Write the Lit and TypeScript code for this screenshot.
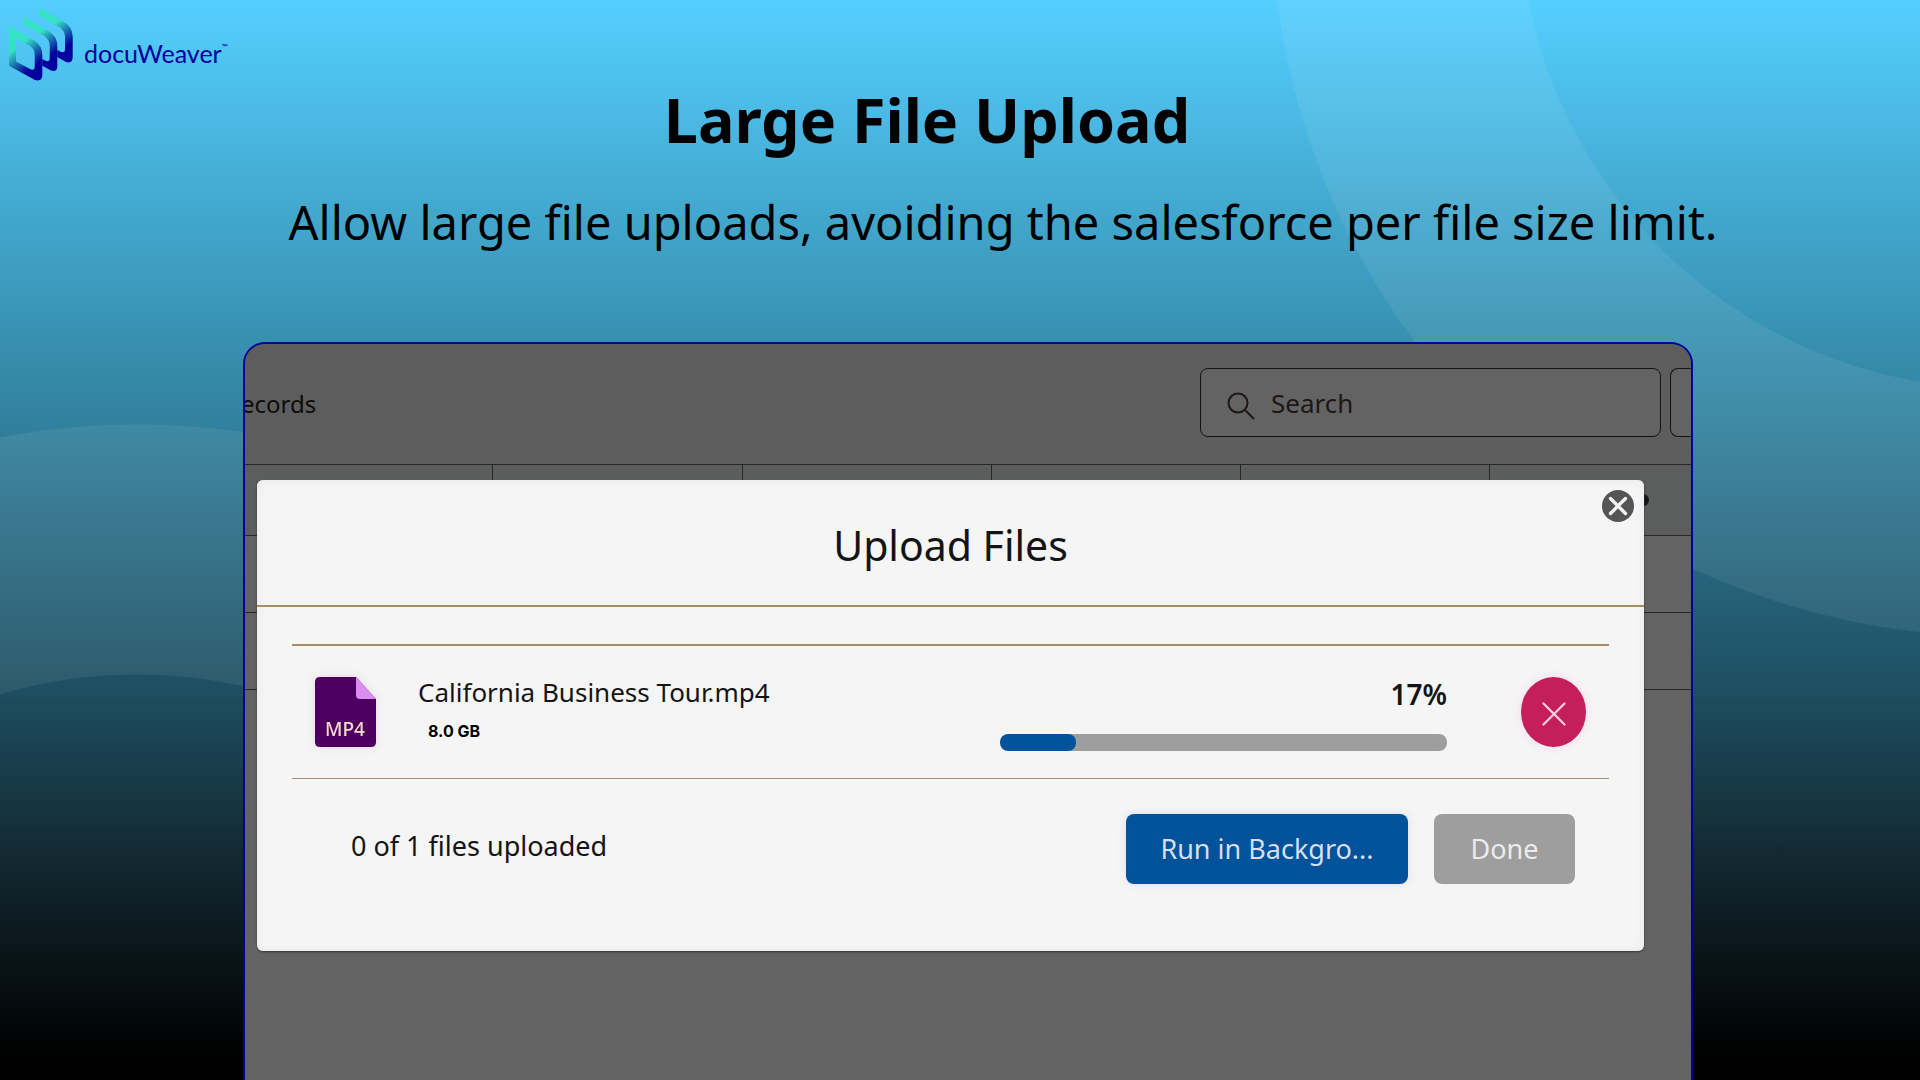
import { LitElement, html, css, svg } from "lit";
import { customElement, state } from "lit/decorators.js";

const cross = (w: number) => svg`<path d="M3 3 L21 21 M21 3 L3 21" fill="none" stroke="currentColor" stroke-linecap="round" stroke-width=${w} />`;

@customElement("app-root")
export class AppRoot extends LitElement {
  @state() private progress = 17;

  static styles = css`
    :host {
      display: block;
      font-family: "Noto Sans", "Open Sans", sans-serif;
      color: #141414;
    }
    * { box-sizing: border-box; }
    .page {
      display: flex;
      flex-direction: column;
      height: 100vh;
      overflow: hidden;
      background:
        radial-gradient(circle at calc(100% + 80px) -92px, transparent 480px, rgba(255, 255, 255, 0.07) 481px, rgba(255, 255, 255, 0.07) 728px, transparent 729px),
        radial-gradient(circle at 137px 1155px, transparent 480px, rgba(255, 255, 255, 0.07) 481px, rgba(255, 255, 255, 0.07) 730px, transparent 731px),
        linear-gradient(#54cfff 0%, #3487a5 36%, #1e4e61 64%, #12272f 80%, #000 98%);
    }
    .brand {
      display: flex;
      align-items: center;
      align-self: flex-start;
      gap: 11px;
      height: 88px;
      padding-left: 8px;
      color: #00009c;
      text-decoration: none;
    }
    .mark { width: 65px; height: 73px; }
    .name { font: 25px/32px "Lato", sans-serif; padding-top: 18px; }
    .tm { font-size: 8px; vertical-align: top; line-height: 20px; }
    .intro { text-align: center; color: #000; height: 254px; }
    .title { margin: 0 0 40px; padding-right: 66px; font: bold 61px/64px "Noto Sans", sans-serif; }
    .lead { margin: 0; padding-left: 86px; font: 47px/60px "Noto Sans", sans-serif; }
    .frame {
      position: relative;
      flex: 1;
      margin: 0 227px 0 243px;
      border: 2px solid #00009c;
      border-bottom: 0;
      border-radius: 22px 22px 0 0;
      overflow: hidden;
      background: #636363;
    }
    .toolbar {
      display: flex;
      align-items: center;
      height: 120px;
      padding-bottom: 3px;
      background: #5d5d5d;
      font-size: 26px;
      gap: 9px;
    }
    .crumb { flex: 1; margin-left: -4px; padding-top: 2px; color: #0c0c0c; font-size: 24px; }
    .search {
      display: flex;
      align-items: center;
      gap: 16px;
      width: 461px;
      height: 69px;
      padding: 0 26px;
      border: 1px solid #161311;
      border-radius: 8px;
      background: #636363;
      color: #1c1714;
    }
    .search svg { width: 28px; height: 28px; flex: none; margin-top: 6px; }
    .search input {
      flex: 1;
      min-width: 0;
      border: 0;
      padding: 0;
      outline: 0;
      background: none;
      font: inherit;
      color: inherit;
    }
    .search input::placeholder { color: inherit; opacity: 1; }
    .next {
      width: 21px;
      height: 69px;
      border: 1px solid #161311;
      border-right: 0;
      border-radius: 8px 0 0 8px;
      background: #636363;
    }
    .records { width: 103.5%; margin-left: -2px; border-collapse: collapse; table-layout: fixed; }
    .records td, .records th { border: 1px solid #2b2624; padding: 0; height: 77px; }
    .records td { border-left: 0; border-right: 0; }
    .records th { height: 71px; background: #5c5d5d; }
    .dot { display: block; width: 12px; height: 12px; margin-left: 147px; border-radius: 50%; background: #15161a; }
    .modal {
      position: absolute;
      top: 136px;
      left: 12px;
      right: 47px;
      border-radius: 6px;
      background: #f5f5f5;
      box-shadow: 0 1px 2px #3a332e, inset 0 0 8px #e6e8ec;
    }
    .head {
      display: flex;
      align-items: center;
      justify-content: center;
      height: 127px;
      padding-top: 4px;
      border-bottom: 2px solid #a58d68;
    }
    .heading { margin: 0; font-size: 41px; line-height: 56px; font-weight: 400; }
    .close {
      position: absolute;
      top: 10px;
      right: 10px;
      display: grid;
      place-items: center;
      width: 32px;
      height: 32px;
      padding: 0;
      border: 0;
      border-radius: 50%;
      background: #555;
      color: #f5f5f5;
    }
    .close svg { width: 20px; height: 20px; }
    .files { list-style: none; margin: 37px 35px 0; padding: 0; border-top: 2px solid #a58d68; }
    .file {
      display: flex;
      align-items: center;
      height: 133px;
      padding: 0 23px;
      border-bottom: 1px solid #a58d68;
    }
    .type { width: 61px; height: 70px; flex: none; filter: drop-shadow(0 0 4px #e6d9e6); }
    .type text { font: 500 19px "Noto Sans", sans-serif; fill: #f3dccb; }
    .info { flex: 1; padding-left: 42px; font-size: 26px; line-height: 38px; }
    .size { padding-left: 10px; font: bold 16px/40px "Inter", sans-serif; color: #000; }
    .status { width: 447px; text-align: right; font-weight: 600; font-size: 28px; line-height: 40px; }
    .track { height: 17px; margin-top: 20px; border-radius: 8px; background: #9e9e9e; overflow: hidden; }
    .fill { height: 100%; border-radius: 8px; background: #00539b; }
    .cancel {
      display: grid;
      place-items: center;
      width: 65px;
      height: 70px;
      margin-left: 74px;
      padding: 0;
      border: 0;
      border-radius: 50%;
      background: #c41f5b;
      color: #f8cfe0;
      box-shadow: 0 0 8px #f7d5e8;
    }
    .cancel svg { width: 28px; height: 28px; margin-top: 4px; }
    .foot {
      display: flex;
      align-items: center;
      gap: 26px;
      padding: 35px 69px 67px 94px;
    }
    .count { flex: 1; font-size: 27px; line-height: 40px; margin: 0; padding-bottom: 6px; }
    .btn {
      height: 70px;
      width: 141px;
      border: 0;
      border-radius: 8px;
      padding: 0;
      font: 27px/40px "Noto Sans", sans-serif;
      background: #9e9e9e;
      color: #ececec;
    }
    .primary { width: 282px; background: #00539b; color: #d9def2; box-shadow: 0 0 8px #dcdff5; }
  `;

  render() {
    return html`
      <main class="page">
        <a class="brand" href="#">
          <svg class="mark" viewBox="0 0 65 73" aria-hidden="true">
            <defs>
              <linearGradient id="ink" x1="0.3" y1="0.1" x2="0.7" y2="0.95">
                <stop offset="0.25" stop-color="#34e3c3" />
                <stop offset="0.82" stop-color="#00009c" />
              </linearGradient>
            </defs>
            <g fill="url(#ink)" fill-rule="evenodd">
              <path d="M31 0 L56 14 Q64.7 19 64.7 29 V49 Q64.7 56 58 54 L49.3 49 V41.7 L52 43.5 Q57 46 57 41 V29 Q57 23 52 19.5 L31 7.5 Z" />
              <path d="M16 9 L41 23.5 Q49.3 28.5 49.3 38 V58 Q49.3 64.5 43 62.5 L34.3 57.7 V51 L37 52.5 Q41.7 55 41.7 50 V38 Q41.7 32 37 28.5 L16 16.5 Z" />
              <path d="M1 18 L26 32.5 Q34.3 37.5 34.3 47 V67 Q34.3 74 27 72 L1 57.7 Z M8 30 V53.5 L22 61 Q26.7 63.5 26.7 58.5 V47 Q26.7 41 22 38 Z" />
            </g>
          </svg>
          <span class="name">docuWeaver<span class="tm">™</span></span>
        </a>
        <header class="intro">
          <h1 class="title">Large File Upload</h1>
          <p class="lead">Allow large file uploads, avoiding the salesforce per file size limit.</p>
        </header>
        <section class="frame">
          <div class="toolbar">
            <span class="crumb">ecords</span>
            <label class="search">
              <svg viewBox="0 0 28 28" aria-hidden="true"><g fill="none" stroke="currentColor" stroke-width="2"><circle cx="11" cy="11" r="9.5" /><path d="M18 18 L27 27" /></g></svg>
              <input type="search" placeholder="Search" aria-label="Search" />
            </label>
            <div class="next"></div>
          </div>
          <table class="records">
            <thead><tr>${[0, 1, 2, 3, 4, 5].map((i) => html`<th>${i === 5 ? html`<span class="dot"></span>` : ""}</th>`)}</tr></thead>
            <tbody>${[0, 1].map(() => html`<tr><td colspan="6"></td></tr>`)}</tbody>
          </table>
          <div class="modal" role="dialog" aria-labelledby="heading">
            <div class="head"><h2 class="heading" id="heading">Upload Files</h2></div>
            <button class="close" aria-label="Close"><svg viewBox="0 0 24 24">${cross(4)}</svg></button>
            <ul class="files">
              <li class="file">
                <svg class="type" viewBox="0 0 61 70">
                  <path d="M5 0 H41 L61 22 V65 Q61 70 56 70 H5 Q0 70 0 65 V5 Q0 0 5 0 Z" fill="#4d005f" />
                  <path d="M41 0 L61 22 H45 Q41 22 41 18 Z" fill="#dc8df0" />
                  <text x="10" y="59">MP4</text>
                </svg>
                <div class="info">California Business Tour.mp4<div class="size">8.0 GB</div></div>
                <div class="status">
                  ${this.progress}%
                  <div class="track"><div class="fill" style="width:${this.progress}%"></div></div>
                </div>
                <button class="cancel" aria-label="Cancel upload"><svg viewBox="0 0 24 24">${cross(2)}</svg></button>
              </li>
            </ul>
            <div class="foot">
              <p class="count">0 of 1 files uploaded</p>
              <button class="btn primary">Run in Backgro...</button>
              <button class="btn">Done</button>
            </div>
          </div>
        </section>
      </main>
    `;
  }
}
